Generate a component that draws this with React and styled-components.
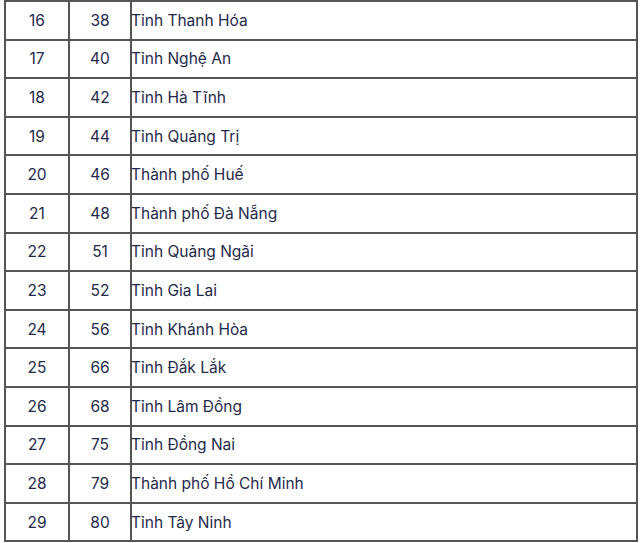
import React from "react";
import styled, { createGlobalStyle } from "styled-components";

const rows = [
  ["16", "38", "Tỉnh Thanh Hóa"],
  ["17", "40", "Tỉnh Nghệ An"],
  ["18", "42", "Tỉnh Hà Tĩnh"],
  ["19", "44", "Tỉnh Quảng Trị"],
  ["20", "46", "Thành phố Huế"],
  ["21", "48", "Thành phố Đà Nẵng"],
  ["22", "51", "Tỉnh Quảng Ngãi"],
  ["23", "52", "Tỉnh Gia Lai"],
  ["24", "56", "Tỉnh Khánh Hòa"],
  ["25", "66", "Tỉnh Đắk Lắk"],
  ["26", "68", "Tỉnh Lâm Đồng"],
  ["27", "75", "Tỉnh Đồng Nai"],
  ["28", "79", "Thành phố Hồ Chí Minh"],
  ["29", "80", "Tỉnh Tây Ninh"],
];

const GlobalStyle = createGlobalStyle`
  body {
    margin: 0;
    background: #ffffff;
    font-family: Inter, "Noto Sans", sans-serif;
    overflow: hidden;
  }
`;

const Page = styled.div`
  padding: 0 2px 0 4px;
  height: 543px;
  overflow: hidden;
`;

const Table = styled.table`
  width: 634px;
  border-collapse: collapse;
  table-layout: fixed;
  color: #1f2a4a;
  font-size: 15.5px;
`;

const Row = styled.tr`
  height: 38.6px;
`;

const Cell = styled.td`
  border: 2px solid #555;
  padding: ${(p) => (p.$center ? "0" : "0 0 0 0")};
  text-align: ${(p) => (p.$center ? "center" : "left")};
  text-indent: ${(p) => (p.$center ? "0" : "-1px")};
  vertical-align: middle;
  white-space: nowrap;
`;

const App = () => {
  return (
    <>
      <GlobalStyle />
      <Page>
        <Table>
          <colgroup>
            <col style={{ width: "64px" }} />
            <col style={{ width: "62px" }} />
            <col />
          </colgroup>
          <tbody>
            {rows.map((r) => (
              <Row key={r[0]}>
                <Cell $center>{r[0]}</Cell>
                <Cell $center>{r[1]}</Cell>
                <Cell>{r[2]}</Cell>
              </Row>
            ))}
          </tbody>
        </Table>
      </Page>
    </>
  );
};

export default App;
